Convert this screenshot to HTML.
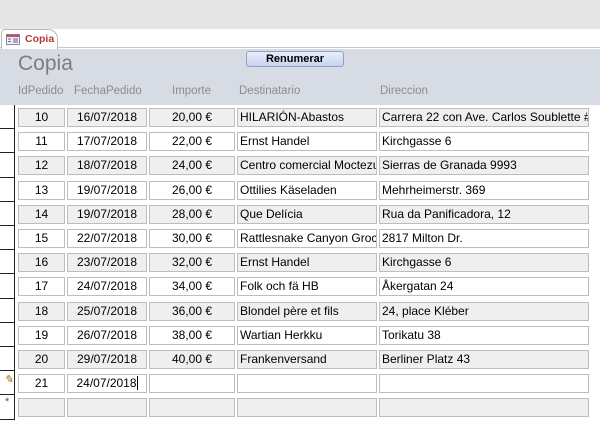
<!DOCTYPE html>
<html><head><meta charset="utf-8"><style>
*{margin:0;padding:0;box-sizing:border-box}
body{width:600px;height:424px;overflow:hidden;background:#fff;font-family:"Liberation Sans",sans-serif;position:relative}
.top{position:absolute;left:0;top:0;width:600px;height:29px;background:#e6e6e6}
.strip{position:absolute;left:0;top:29px;width:600px;height:19px;background:#fff;border-bottom:1px solid #c8c8c8}
.tab{position:absolute;left:1px;top:29px;width:57px;height:20px;background:#fff;border:1px solid #b9b9b9;border-bottom:none;border-radius:4px 10px 0 0}
.tab span{position:absolute;left:23px;top:3px;font-size:10.5px;font-weight:bold;color:#b03a3a}
.hdr{position:absolute;left:0;top:49px;width:600px;height:56px;background:#d7dce4}
.title{position:absolute;left:18px;top:52px;font-size:21px;color:#7d7d7d}
.lbl{position:absolute;top:85px;font-size:11.5px;color:#8c8c8c}
.btn{position:absolute;left:246px;top:51px;width:98px;height:16px;border:1px solid #8fa2c6;border-radius:3px;background:linear-gradient(#e9eefa,#c6d3f0);font-size:11px;font-weight:bold;text-align:center;line-height:14px;color:#000}
.sel{position:absolute;left:0;width:15px;height:24.2px;border-right:1.5px solid #222;border-bottom:1px solid #222}
.c{position:absolute;height:19px;border:1px solid #bdbdbd;font-size:12px;line-height:17px;white-space:nowrap;overflow:hidden;color:#000}
.g{background:#efefef}
.w{background:#fff}
.ctr{text-align:center}
.l{padding-left:2px}
</style></head><body>
<div class="top"></div><div class="strip"></div>
<div class="tab"><svg style="position:absolute;left:4px;top:4px" width="14" height="11"><rect x="0.5" y="0.5" width="13" height="10" fill="#eef" stroke="#8a8aa8"/><rect x="0.5" y="0.5" width="13" height="2.5" fill="#c0506a"/><line x1="2" y1="5" x2="5" y2="5" stroke="#667"/><line x1="2" y1="7.5" x2="5" y2="7.5" stroke="#667"/><rect x="7" y="4" width="5" height="5" fill="#aab" /></svg><span>Copia</span></div>
<div class="hdr"></div>
<div class="title">Copia</div>
<div class="btn">Renumerar</div>
<div class="lbl" style="left:18px">IdPedido</div>
<div class="lbl" style="left:74px">FechaPedido</div>
<div class="lbl" style="left:172px">Importe</div>
<div class="lbl" style="left:239px">Destinatario</div>
<div class="lbl" style="left:380px">Direccion</div>
<div id="rows"></div>
<script>
var d=[["10","16/07/2018","20,00 €","HILARIÓN-Abastos","Carrera 22 con Ave. Carlos Soublette #8-35"],
["11","17/07/2018","22,00 €","Ernst Handel","Kirchgasse 6"],
["12","18/07/2018","24,00 €","Centro comercial Moctezuma","Sierras de Granada 9993"],
["13","19/07/2018","26,00 €","Ottilies Käseladen","Mehrheimerstr. 369"],
["14","19/07/2018","28,00 €","Que Delícia","Rua da Panificadora, 12"],
["15","22/07/2018","30,00 €","Rattlesnake Canyon Grocery","2817 Milton Dr."],
["16","23/07/2018","32,00 €","Ernst Handel","Kirchgasse 6"],
["17","24/07/2018","34,00 €","Folk och fä HB","Åkergatan 24"],
["18","25/07/2018","36,00 €","Blondel père et fils","24, place Kléber"],
["19","26/07/2018","38,00 €","Wartian Herkku","Torikatu 38"],
["20","29/07/2018","40,00 €","Frankenversand","Berliner Platz 43"],
["21","24/07/2018","","",""],
["","","","",""]];
var cols=[[18,47,"ctr"],[67,80,"ctr"],[149,86,"ctr"],[237,140,"l"],[379,210,"l"]];
var h="";
for(var i=0;i<d.length;i++){
 var t=108+i*24.2, cls=(i==11)?"w":(i%2==0?"g":"w");
 h+='<div class="sel" style="top:'+(105+i*24.2)+'px"></div>';
 for(var j=0;j<5;j++){var c=cols[j];var txt=d[i][j];if(i==11&&j==1)txt+='<span style="border-left:1px solid #000"></span>';
 h+='<div class="c '+cls+' '+c[2]+'" style="left:'+c[0]+'px;top:'+t+'px;width:'+c[1]+'px">'+txt+'</div>';}
}
h+='<div style="position:absolute;left:4px;top:373px;font-size:11px;font-style:italic;color:#a06000">&#x270E;</div>';
h+='<div style="position:absolute;left:5px;top:396px;font-size:11px;color:#555">*</div>';
document.getElementById("rows").innerHTML=h;
</script>
</body></html>
